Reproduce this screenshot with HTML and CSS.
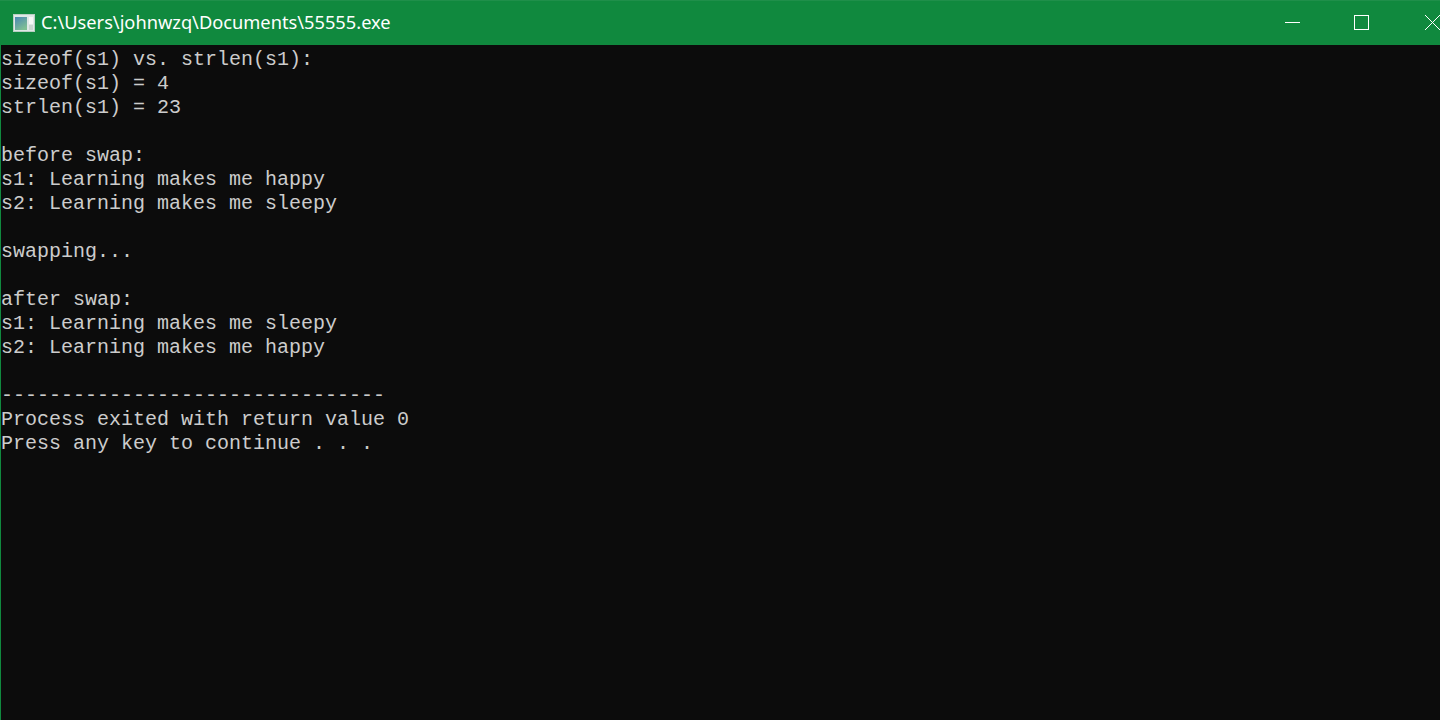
FILE: index.html
```html
<!DOCTYPE html>
<html lang="en">
<head>
<meta charset="utf-8">
<title>55555.exe</title>
<link rel="stylesheet" href="styles.css">
</head>
<body>
<div class="window">
  <header class="titlebar">
    <svg class="app-icon" width="22" height="18" viewBox="0 0 22 18">
      <defs><linearGradient id="g" x1="0" y1="0" x2="0.6" y2="1"><stop offset="0" stop-color="#4a86b4"/><stop offset="1" stop-color="#7fbf94"/></linearGradient></defs>
      <rect x="0.5" y="0.5" width="21" height="17" fill="#dfe8e6" stroke="#b9cfc4"/>
      <rect x="2" y="3" width="12" height="13" fill="url(#g)"/>
      <rect x="16" y="3" width="4" height="7" fill="#f6f8f6"/>
      <rect x="16" y="11" width="4" height="5" fill="#c9d6d0"/>
    </svg>
    <span class="title">C:\Users\johnwzq\Documents\55555.exe</span>
    <div class="controls">
      <svg class="ctl" width="69" height="45" viewBox="0 0 69 45"><path d="M27 22.5H42" stroke="#fff" fill="none"/></svg>
      <svg class="ctl" width="69" height="45" viewBox="0 0 69 45"><rect x="27.5" y="15.5" width="14" height="14" stroke="#fff" fill="none"/></svg>
      <svg class="ctl" width="69" height="45" viewBox="0 0 69 45"><path d="M29 15L44 30M44 15L29 30" stroke="#fff" fill="none"/></svg>
    </div>
  </header>
  <pre class="console">sizeof(s1) vs. strlen(s1):
sizeof(s1) = 4
strlen(s1) = 23

before swap:
s1: Learning makes me happy
s2: Learning makes me sleepy

swapping...

after swap:
s1: Learning makes me sleepy
s2: Learning makes me happy

--------------------------------
Process exited with return value 0
Press any key to continue . . .</pre>
</div>
</body>
</html>
```
FILE: styles.css
```css
html, body {
  margin: 0;
  height: 100%;
  overflow: hidden;
  background: #0c0c0c;
}
.window {
  display: flex;
  flex-direction: column;
  height: 720px;
  border-left: 1px solid #10893e;
  box-sizing: border-box;
}
.titlebar {
  display: flex;
  align-items: center;
  height: 45px;
  flex: none;
  margin-left: -1px;
  padding-left: 13px;
  background: #10893e;
  box-shadow: inset 0 1px 0 #1f8f4a;
}
.app-icon {
  flex: none;
  margin-right: 6px;
}
.title {
  padding-bottom: 2px;
  font-family: "Noto Sans", "Liberation Sans", sans-serif;
  font-size: 18.25px;
  color: #fff;
  white-space: nowrap;
}
.controls {
  display: flex;
  margin-left: auto;
  width: 182px;
  overflow: hidden;
}
.ctl {
  flex: none;
  display: block;
}
.console {
  margin: 0;
  padding: 3px 0 0 0;
  font-family: "Liberation Mono", monospace;
  font-size: 20px;
  line-height: 24px;
  color: #cccccc;
}
```
